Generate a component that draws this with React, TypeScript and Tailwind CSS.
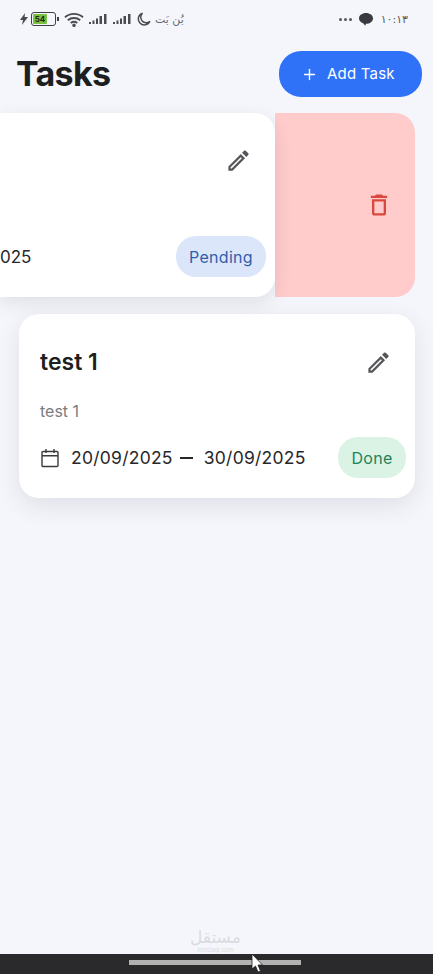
import { Plus } from 'lucide-react';

const EDIT_PATH =
  'M3 17.25V21h3.75L17.81 9.94l-3.75-3.75L3 17.25zM5.92 19H5v-.92l9.06-9.06.92.92L5.92 19zM20.71 5.63l-2.34-2.34c-.2-.2-.45-.29-.71-.29s-.51.1-.7.29l-1.83 1.83 3.75 3.75 1.83-1.83c.39-.39.39-1.02 0-1.41z';

function EditIcon() {
  return (
    <svg viewBox="0 0 24 24" className="h-[27px] w-[27px] fill-[#55565a]">
      <path d={EDIT_PATH} />
    </svg>
  );
}

function TrashIcon() {
  return (
    <svg viewBox="0 0 24 24" className="h-[28px] w-[28px] fill-[#d9483f]">
      <path d="M16 9v10H8V9h8m-1.500-6h-5l-1 1H5v2h14V4h-3.500l-1-1zM18 7H6v12c0 1.100.9 2 2 2h8c1.100 0 2-.9 2-2V7z" />
    </svg>
  );
}

function CalendarIcon() {
  return (
    <svg viewBox="0 0 20 20" className="h-[20px] w-[20px] fill-none stroke-[#3a3b3e] stroke-[1.4]">
      <rect x="2" y="3.500" width="16" height="15" rx="1" />
      <path d="M2 7.800h16M6 1v4M14 1v4" />
    </svg>
  );
}

function Signal() {
  return (
    <svg viewBox="0 0 19 12" className="h-[12px] w-[19px] fill-[#4a4b4f]">
      <rect x="0" y="9" width="2" height="2" />
      <rect x="3.500" y="7.500" width="2" height="3.500" />
      <rect x="7" y="5.500" width="2" height="5.500" />
      <rect x="10.500" y="3" width="2.500" height="8" />
      <rect x="15" y="1" width="2.500" height="10" />
    </svg>
  );
}

function StatusBar() {
  return (
    <div className="flex h-[38px] items-center justify-between pl-[20px] pr-[25px] text-[#4a4b4f]">
      <div className="flex items-center">
        <svg viewBox="0 0 8 12" className="h-[12px] w-[8px] fill-[#4a4b4f]">
          <path d="M5 0 0 7h3l-1 5 6-8H4.600z" />
        </svg>
        <div className="ml-[3px] flex h-[14px] w-[25px] items-center rounded-[3px] border border-[#3f4043] p-[1px]">
          <div className="flex h-full w-[14px] items-center justify-center rounded-[1px] bg-[#7ac143] text-[8px] leading-none font-bold text-[#1f2a18]">
            54
          </div>
        </div>
        <div className="ml-[1px] h-[4px] w-[2px] bg-[#3f4043]" />
        <svg viewBox="0 0 20 15" className="ml-[5px] h-[15px] w-[20px] fill-none stroke-[#4a4b4f] stroke-[1.9]">
          <path d="M1 5.200C6 .8 14 .8 19 5.200" />
          <path d="M3.800 8.200c3.400-2.900 9-2.900 12.400 0" />
          <path d="M6.700 11c1.900-1.400 4.700-1.400 6.600 0" />
          <circle cx="10" cy="13.300" r="0.8" className="fill-[#4a4b4f]" />
        </svg>
        <div className="ml-[5px] flex gap-[5px]">
          <Signal />
          <Signal />
        </div>
        <svg viewBox="0 0 14 14" className="ml-[5px] h-[14px] w-[14px] fill-none stroke-[#4a4b4f] stroke-[1.5]">
          <path d="M5.500 1.200a6 6 0 1 0 7.400 8 5.400 5.400 0 0 1-7.400-8z" />
        </svg>
        <span className="ml-[4px] font-['DejaVu_Sans',sans-serif] text-[11px] leading-none text-[#66676b]">
          بُن بَت
        </span>
      </div>
      <div className="flex items-center">
        <div className="flex gap-[2px]">
          <div className="h-[3px] w-[3px] rounded-full bg-[#55565a]" />
          <div className="h-[3px] w-[3px] rounded-full bg-[#55565a]" />
          <div className="h-[3px] w-[3px] rounded-full bg-[#55565a]" />
        </div>
        <svg viewBox="0 0 14 13" className="ml-[7px] h-[13px] w-[14px] fill-[#3a3b3e]">
          <path d="M7 0c3.900 0 7 2.400 7 5.400s-3.100 5.400-7 5.400l-.8 2-2-2.600C1.700 9.300 0 7.500 0 5.400 0 2.400 3.100 0 7 0z" />
        </svg>
        <span className="ml-[8px] font-['DejaVu_Sans',sans-serif] text-[11px] leading-none text-[#55565a]">
          ١٠:١٣
        </span>
      </div>
    </div>
  );
}

function Chip({ label, className }: { label: string; className: string }) {
  return (
    <div className={`flex h-[41px] items-center justify-center rounded-[20px] text-[16px] font-normal tracking-[0.3px] ${className}`}>
      {label}
    </div>
  );
}

export default function App() {
  return (
    <div className="relative flex h-[974px] w-[433px] flex-col overflow-hidden bg-[#f5f6fb] font-['Inter',sans-serif]">
      <StatusBar />

      <header className="mt-[13px] flex h-[46px] items-center justify-between pl-[16px] pr-[11px]">
        <h1 className="text-[34px] leading-none font-bold tracking-[-0.7px] text-[#1d1e20]">Tasks</h1>
        <button className="flex h-[46px] w-[143px] items-center rounded-[22px] bg-[#2f72f8] pl-[22px] text-[15px] font-normal tracking-[0.2px] text-white">
          <Plus size={17} strokeWidth={2} />
          <span className="ml-[9px]">Add Task</span>
        </button>
      </header>

      <main className="mt-[16px] flex flex-1 flex-col gap-[17px]">
        {/* swiped row, the delete action shows behind the card */}
        <div className="mr-[18px] flex h-[184px]">
          <div className="z-10 flex w-[275px] flex-col rounded-r-[20px] bg-white shadow-[0_6px_18px_rgba(30,35,60,0.1)]">
            <div className="mt-[34px] flex justify-end pr-[23px]">
              <EditIcon />
            </div>
            <div className="mt-[62px] flex items-center justify-between pr-[9px]">
              <span className="pt-[2px] text-[17px] text-[#26272a]">025</span>
              <Chip label="Pending" className="w-[90px] bg-[#dbe6fb] text-[#2f5fa8]" />
            </div>
          </div>
          <div className="flex w-[140px] items-center justify-end rounded-r-[20px] bg-[#ffcbcb] pr-[22px]">
            <TrashIcon />
          </div>
        </div>

        <div className="ml-[19px] mr-[18px] flex h-[184px] flex-col rounded-[20px] bg-white pl-[21px] pr-[9px] shadow-[0_8px_24px_rgba(30,35,60,0.1)]">
          <div className="mt-[34px] flex items-center justify-between pr-[14px]">
            <span className="text-[23px] leading-[28px] font-semibold text-[#1d1e20]">test 1</span>
            <EditIcon />
          </div>
          <p className="mt-[23px] text-[16px] leading-[24px] text-[#7b7c80]">test 1</p>
          <div className="mt-[14px] flex items-center justify-between">
            <div className="flex items-center pt-[1px] text-[17.5px] tracking-[0.25px] text-[#26272a]">
              <CalendarIcon />
              <span className="ml-[11px]">20/09/2025</span>
              <span className="ml-[7px] mr-[11px] h-[1.500px] w-[13px] bg-[#26272a]" />
              <span>30/09/2025</span>
            </div>
            <Chip label="Done" className="w-[68px] bg-[#daf3e4] text-[#23835a]" />
          </div>
        </div>
      </main>

      {/* watermark sits on top of the page */}
      <div className="absolute bottom-[21px] left-[190px] flex flex-col items-center gap-[2px] text-[#d9dbe2]">
        <span className="font-['DejaVu_Sans',sans-serif] text-[17px] leading-[15px]">مستقل</span>
        <span className="text-[6px] leading-[6px]">mostaql.com</span>
      </div>

      <footer className="flex h-[20px] items-start bg-[#2a2a2c] pl-[129px] pt-[6px]">
        <div className="h-[5px] w-[172px] bg-[#b2b2b2]" />
      </footer>

      <svg viewBox="0 0 12 20" className="absolute left-[251px] top-[953px] h-[20px] w-[12px]">
        <path d="M1 1v15l3.500-3 2.500 6 2.500-1-2.500-6h4.500z" className="fill-white stroke-[#222] stroke-[0.8]" />
      </svg>
    </div>
  );
}
